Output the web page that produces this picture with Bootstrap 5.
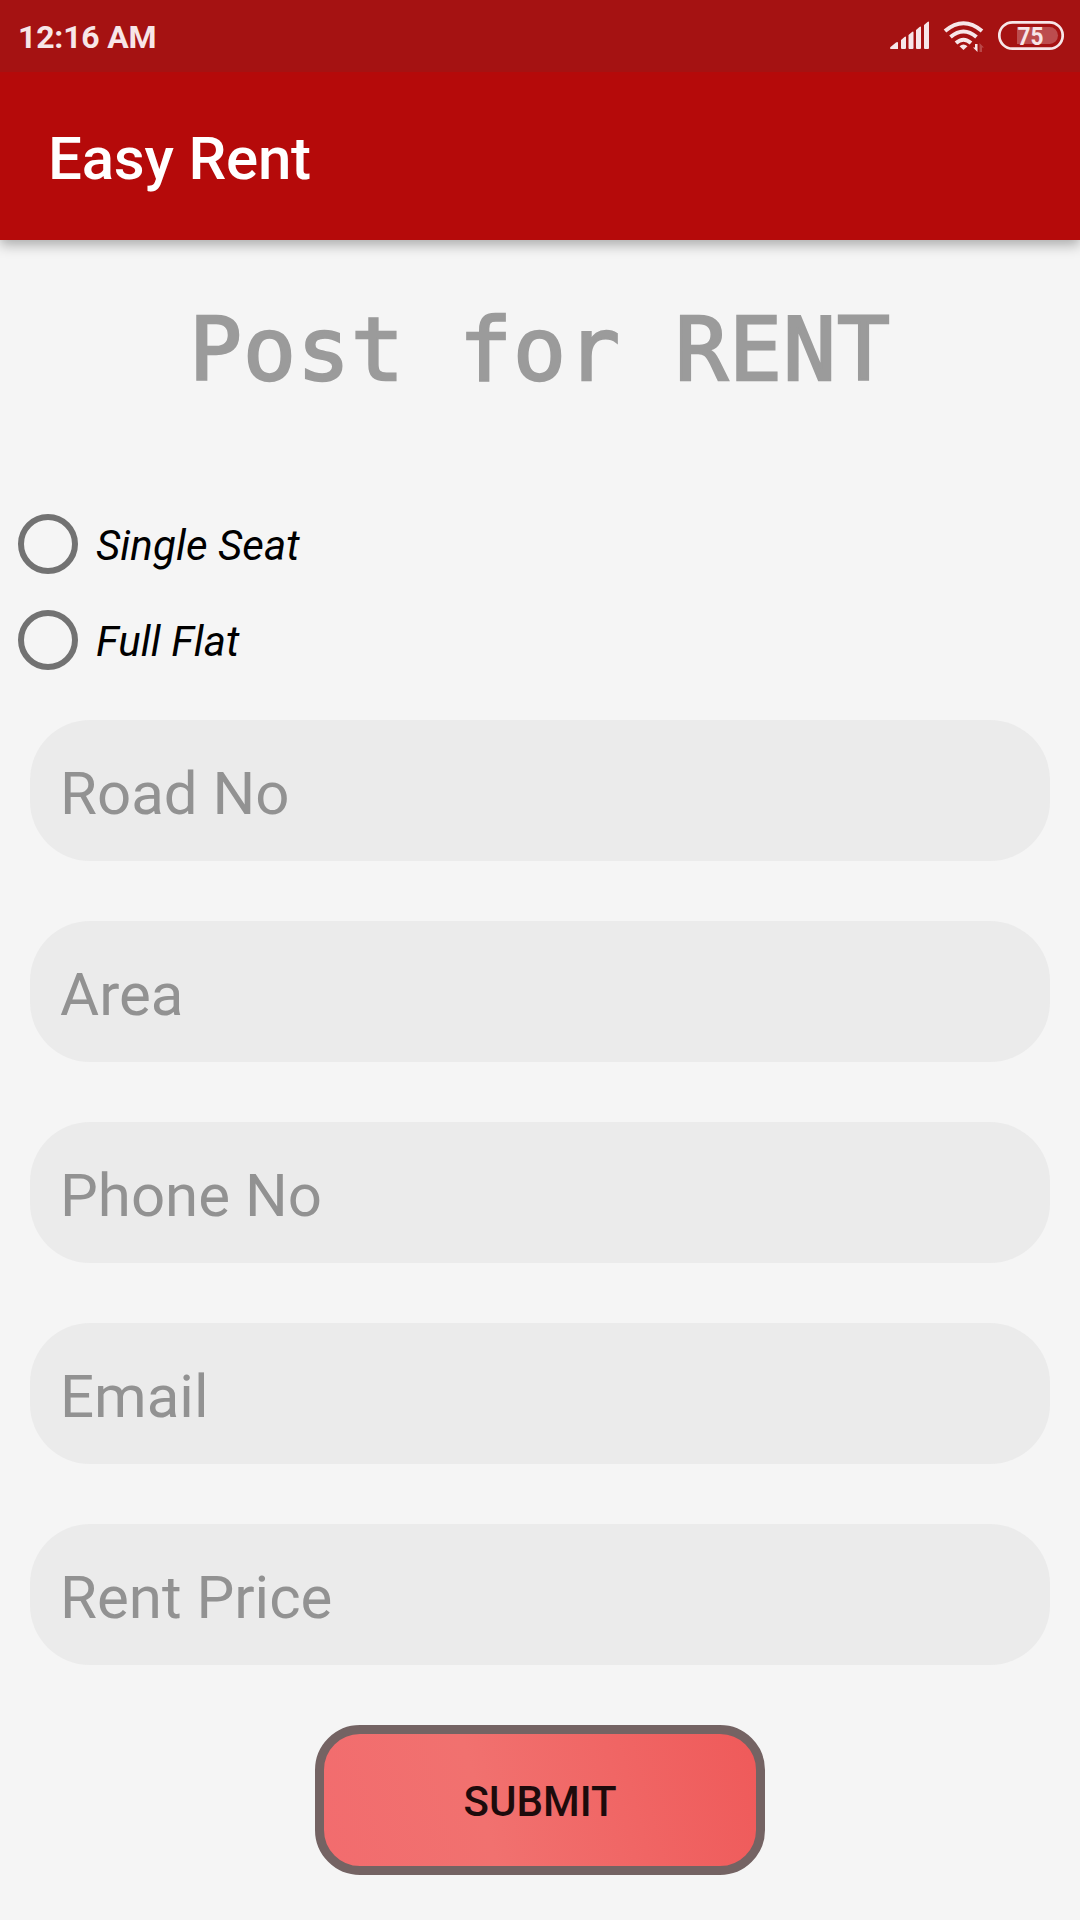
<!DOCTYPE html>
<html lang="en">
<head>
<meta charset="utf-8">
<meta name="viewport" content="width=device-width, initial-scale=1">
<title>Easy Rent</title>
<link href="https://cdn.jsdelivr.net/npm/bootstrap@5.3.0/dist/css/bootstrap.min.css" rel="stylesheet">
<style>
body{background:#f5f5f5;font-family:Roboto,sans-serif;min-height:1920px;overflow:hidden}
.status-bar{height:72px;background:#a51212;color:#f7e6e8;padding:0 16px 0 18px;z-index:1}
.clock{font-size:32px;font-weight:700;line-height:72px;padding-top:2px;letter-spacing:-.2px}
.app-bar{height:168px;background:#b50a0a;box-shadow:0 5px 12px rgba(0,0,0,.3);padding:5px 48px 0}
.app-title{font-size:60px;font-weight:500;line-height:1;color:#fff;letter-spacing:-.2px}
.page-title{height:108px;margin-top:56px;font-family:"DejaVu Sans Mono",monospace;font-size:88px;line-height:108px;letter-spacing:1.02px;color:#9b9b9b;-webkit-text-stroke:2.4px #9b9b9b;white-space:pre}
.choices{margin-top:92px}
.choice{height:96px;padding:0 0 0 18px;gap:18px;font-size:42px;font-style:italic;color:#000;margin:0}
.choice span{padding-top:3px;letter-spacing:.1px}
.choice .form-check-input{width:60px;height:60px;border:6px solid #727272;background-color:transparent;margin:0;float:none}
.fields{padding:32px 30px 0;gap:60px}
.fields .form-control{height:141px;border:0;border-radius:60px;background:#ebebeb;font-size:60px;padding:6px 30px 0;line-height:1.2}
.fields .form-control::placeholder{color:#929292;opacity:1}
.submit{width:450px;height:150px;margin-top:60px;border:9px solid #746363;border-radius:45px;background:linear-gradient(75deg,#f26c6e 0%,#f1716f 37%,#ef5a5a 100%);font-size:42px;font-weight:500;color:#1d0b0c;padding:2px 0 0}
.submit:hover{color:#1d0b0c;border-color:#746363}
</style>
<script src="https://cdn.jsdelivr.net/npm/bootstrap@5.3.0/dist/js/bootstrap.bundle.min.js"></script>
</head>
<body>
<div class="status-bar position-relative d-flex align-items-center justify-content-between">
  <span class="clock">12:16 AM</span>
  <svg width="176" height="40" viewBox="888 16 176 40" fill="#f7e6e8" aria-hidden="true">
    <path d="M890.500 49q-1-1 0-2l5.500-4.500q2-1 2 .5v6zM901 40l3.500-3q1.500-1 1.500.5V48q0 1-1 1h-3q-1 0-1-1zM908.500 35l3.500-3q1.500-1 1.500.5V48q0 1-1 1h-3q-1 0-1-1zM916 30l3.500-3q1.500-1 1.500.5V48q0 1-1 1h-3q-1 0-1-1zM924 25l3.500-3q1.500-1 1.500.5V48q0 1-1 1h-3q-1 0-1-1z"/>
    <g fill="none" stroke="#f7e6e8" stroke-width="4"><path d="M945 31Q963.500 15.500 982 31M950.500 37Q963.500 26 976.500 37M956 43Q963.500 36.500 971 43"/></g>
    <path d="M963.500 50l-4-3.700q4-3.800 8 0z"/>
    <path d="M975 44h2.500v8l-4.500-4.500h2z"/><path d="M979.500 52v-9l4.500 4.500h-2V52z" opacity=".25"/>
    <rect x="999.300" y="22.300" width="63.400" height="26.400" rx="13.200" fill="none" stroke="#f7e6e8" stroke-width="2.700"/>
    <path d="M1017 27h32.500a8.500 8.500 0 0 1 0 17H1017z" opacity=".28"/>
    <text x="1030.500" y="45" text-anchor="middle" font-family="Roboto,sans-serif" font-size="26.500" font-weight="700" textLength="26" lengthAdjust="spacingAndGlyphs">75</text>
  </svg>
</div>
<header class="app-bar d-flex align-items-center"><div class="app-title">Easy Rent</div></header>
<main class="d-flex flex-column">
  <h1 class="page-title text-center fw-normal mb-0">Post for RENT</h1>
  <div class="choices">
    <label class="choice form-check d-flex align-items-center"><input class="form-check-input" type="radio" name="kind"><span>Single Seat</span></label>
    <label class="choice form-check d-flex align-items-center"><input class="form-check-input" type="radio" name="kind"><span>Full Flat</span></label>
  </div>
  <form class="fields d-flex flex-column">
    <input class="form-control" type="text" placeholder="Road No">
    <input class="form-control" type="text" placeholder="Area">
    <input class="form-control" type="text" placeholder="Phone No">
    <input class="form-control" type="text" placeholder="Email">
    <input class="form-control" type="text" placeholder="Rent Price">
  </form>
  <button type="button" class="submit btn align-self-center">SUBMIT</button>
</main>
</body>
</html>
